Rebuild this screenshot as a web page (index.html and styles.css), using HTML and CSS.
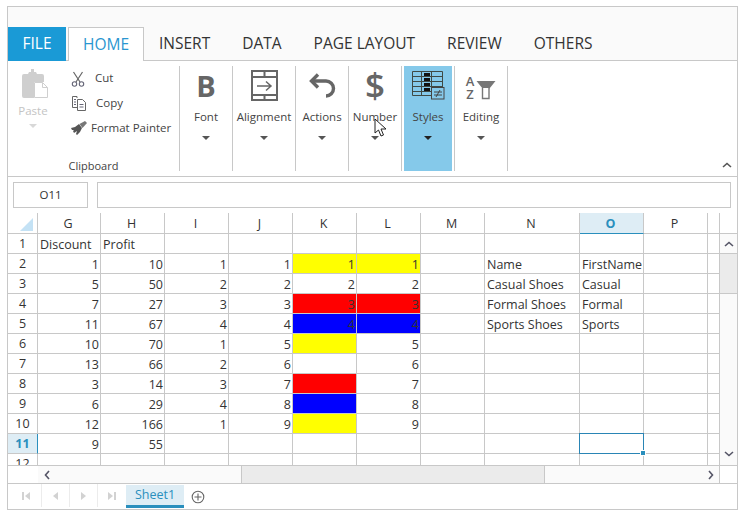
FILE: index.html
```html
<!DOCTYPE html>
<html lang="en">
<head>
    <meta charset="UTF-8">
    <meta name="viewport" content="width=device-width, initial-scale=1.0">
    <title>Spreadsheet</title>
    <link rel="stylesheet" href="styles.css">
</head>
<body>
<div class="app">
    <!-- ribbon tabs -->
    <div class="tabs">
        <div class="tab tab-file">FILE</div>
        <div class="tab tab-home">HOME</div>
        <div class="tab">INSERT</div>
        <div class="tab">DATA</div>
        <div class="tab">PAGE LAYOUT</div>
        <div class="tab">REVIEW</div>
        <div class="tab">OTHERS</div>
    </div>

    <!-- ribbon -->
    <div class="ribbon">
        <div class="group group-clipboard">
            <div class="clip-top">
                <div class="paste">
                    <svg width="28" height="31" viewBox="0 0 28 31">
                        <path d="M8 4h2V1h3v3h2l1 2h5a2 2 0 0 1 2 2v6H13v16H3a2 2 0 0 1-2-2V8a2 2 0 0 1 2-2h4z" fill="#cfcfcf"/>
                        <path d="M13.500 14.500h8l5 5v10h-13z" fill="#fff" stroke="#cfcfcf"/>
                        <path d="M21.500 14.500v5h5" fill="none" stroke="#cfcfcf"/>
                    </svg>
                    <span class="paste-label">Paste</span>
                    <span class="caret caret-off"></span>
                </div>
                <div class="clip-list">
                    <div class="clip-item clip-cut">
                        <svg width="14" height="16" viewBox="0 0 14 16">
                            <path d="M2.500 1l6.500 10M11.500 1L5 11" fill="none" stroke="#666" stroke-width="1.200"/>
                            <circle cx="3.500" cy="13" r="2.200" fill="none" stroke="#667" stroke-width="1.100"/>
                            <circle cx="10.500" cy="13" r="2.200" fill="none" stroke="#667" stroke-width="1.100"/>
                        </svg>
                        <span>Cut</span>
                    </div>
                    <div class="clip-item clip-copy">
                        <svg width="16" height="16" viewBox="0 0 16 16">
                            <path d="M6 3V1.500H1.500v11H6" fill="none" stroke="#666"/>
                            <path d="M6.500 4.500h5l3 3v8h-8z" fill="#fff" stroke="#666"/>
                            <path d="M3 4.500h2M3 7h2M3 9.500h2M8.500 9.500h4M8.500 12h4" stroke="#667" fill="none"/>
                        </svg>
                        <span>Copy</span>
                    </div>
                    <div class="clip-item clip-painter">
                        <svg width="16" height="14" viewBox="0 0 16 14">
                            <path d="M0 7l4-1 4-3 3 4-2 4-3 3-1-1 1-3-3 2-1-2 1-1-2 0z" fill="#555"/>
                            <path d="M8.500 3L14 0l2 2-4.500 5z" fill="#777"/>
                        </svg>
                        <span>Format Painter</span>
                    </div>
                </div>
            </div>
            <div class="group-name">Clipboard</div>
        </div>

        <div class="group big">
            <div class="big-icon glyph-b">B</div>
            <span class="big-label">Font</span>
            <span class="caret"></span>
        </div>
        <div class="group big group-wide">
            <div class="big-icon">
                <svg width="28" height="33" viewBox="0 0 28 33">
                    <rect x="2" y="2" width="25" height="29" fill="none" stroke="#666" stroke-width="2"/>
                    <path d="M2 8h25M2 26h25M14.500 2v6M14.500 26v5" stroke="#666" stroke-width="2" fill="none"/>
                    <path d="M7 17h14M16 12.500l5 4.500-5 4.500" stroke="#666" stroke-width="1.500" fill="none"/>
                </svg>
            </div>
            <span class="big-label">Alignment</span>
            <span class="caret"></span>
        </div>
        <div class="group big">
            <div class="big-icon">
                <svg width="27" height="25" viewBox="0 0 27 25">
                    <path d="M9 1.500L2.500 8 9 14.500" fill="none" stroke="#666" stroke-width="3.400"/>
                    <path d="M3 8h14a7.500 7.500 0 0 1 7.500 7.500v0a7.500 7.500 0 0 1-7.500 7.500" fill="none" stroke="#666" stroke-width="3.400"/>
                </svg>
            </div>
            <span class="big-label">Actions</span>
            <span class="caret"></span>
        </div>
        <div class="group big">
            <div class="big-icon glyph-dollar">$</div>
            <span class="big-label">Number</span>
            <span class="caret"></span>
        </div>
        <div class="group big group-active">
            <div class="active-fill">
                <div class="big-icon">
                    <svg width="34" height="30" viewBox="0 0 34 30">
                        <path d="M1.500 1.500h30v24h-30zM1.500 6.500h30M1.500 11.500h30M1.500 16.500h30M1.500 21.500h30M10.500 1.500v24M20.500 1.500v24" fill="none" stroke="#3f4a45"/>
                        <path d="M13 3h6v3h-6zM13 8h6v3h-6zM13 13h6v3h-6zM13 18h6v3h-6z" fill="#111"/>
                        <rect x="20.500" y="17.500" width="12.500" height="11.500" fill="#85c9ea" stroke="#444"/>
                        <path d="M23 22h8M23 25h8M29 20l-4 7" stroke="#444" fill="none"/>
                    </svg>
                </div>
                <span class="big-label">Styles</span>
                <span class="caret caret-dark"></span>
            </div>
        </div>
        <div class="group big">
            <div class="big-icon edit-icon">
                <div class="az"><span>A</span><span>Z</span></div>
                <svg width="20" height="20" viewBox="0 0 20 20">
                    <path d="M0.500 1h19l-6 7.500H6.500z" fill="#777"/>
                    <path d="M6.500 8v10.500h6.500V8" fill="#fff" stroke="#777" stroke-width="1.400"/>
                </svg>
            </div>
            <span class="big-label">Editing</span>
            <span class="caret"></span>
        </div>
        <div class="collapse">
            <svg width="10" height="6" viewBox="0 0 10 6"><path d="M1 5l4-3.500L9 5" fill="none" stroke="#555" stroke-width="1.600"/></svg>
        </div>
    </div>

    <!-- formula bar -->
    <div class="formula">
        <div class="name-box">O11</div>
        <div class="formula-input"></div>
    </div>

    <!-- grid + vertical scrollbar -->
    <div class="sheet">
        <div class="grid-wrap">
            <table class="grid">
                <colgroup>
                    <col class="c-head"><col class="c-g"><col class="c-std"><col class="c-std"><col class="c-std"><col class="c-std"><col class="c-std"><col class="c-std"><col class="c-n"><col class="c-std"><col class="c-std"><col class="c-last">
                </colgroup>
                <tr class="head-row">
                    <th class="corner"><span class="triangle"></span></th><th>G</th><th>H</th><th>I</th><th>J</th><th>K</th><th>L</th><th>M</th><th>N</th><th class="head-on">O</th><th>P</th><th class="last"></th>
                </tr>
                <tr><th>1</th><td>Discount</td><td>Profit</td><td></td><td></td><td></td><td></td><td></td><td></td><td></td><td></td><td class="last"></td></tr>
                <tr><th>2</th><td class="n">1</td><td class="n">10</td><td class="n">1</td><td class="n">1</td><td class="n yellow">1</td><td class="n yellow">1</td><td></td><td>Name</td><td>FirstName</td><td></td><td class="last"></td></tr>
                <tr><th>3</th><td class="n">5</td><td class="n">50</td><td class="n">2</td><td class="n">2</td><td class="n">2</td><td class="n">2</td><td></td><td>Casual Shoes</td><td>Casual</td><td></td><td class="last"></td></tr>
                <tr><th>4</th><td class="n">7</td><td class="n">27</td><td class="n">3</td><td class="n">3</td><td class="n red">3</td><td class="n red">3</td><td></td><td>Formal Shoes</td><td>Formal</td><td></td><td class="last"></td></tr>
                <tr><th>5</th><td class="n">11</td><td class="n">67</td><td class="n">4</td><td class="n">4</td><td class="n blue">4</td><td class="n blue">4</td><td></td><td>Sports Shoes</td><td>Sports</td><td></td><td class="last"></td></tr>
                <tr><th>6</th><td class="n">10</td><td class="n">70</td><td class="n">1</td><td class="n">5</td><td class="yellow"></td><td class="n">5</td><td></td><td></td><td></td><td></td><td class="last"></td></tr>
                <tr><th>7</th><td class="n">13</td><td class="n">66</td><td class="n">2</td><td class="n">6</td><td></td><td class="n">6</td><td></td><td></td><td></td><td></td><td class="last"></td></tr>
                <tr><th>8</th><td class="n">3</td><td class="n">14</td><td class="n">3</td><td class="n">7</td><td class="red"></td><td class="n">7</td><td></td><td></td><td></td><td></td><td class="last"></td></tr>
                <tr><th>9</th><td class="n">6</td><td class="n">29</td><td class="n">4</td><td class="n">8</td><td class="blue"></td><td class="n">8</td><td></td><td></td><td></td><td></td><td class="last"></td></tr>
                <tr><th>10</th><td class="n">12</td><td class="n">166</td><td class="n">1</td><td class="n">9</td><td class="yellow"></td><td class="n">9</td><td></td><td></td><td></td><td></td><td class="last"></td></tr>
                <tr><th class="row-on">11</th><td class="n">9</td><td class="n">55</td><td></td><td></td><td></td><td></td><td></td><td></td><td class="selected"><span class="sel-box"></span><span class="handle"></span></td><td></td><td class="last"></td></tr>
                <tr><th>12</th><td></td><td></td><td></td><td></td><td></td><td></td><td></td><td></td><td></td><td></td><td class="last"></td></tr>
            </table>
        </div>
        <div class="vscroll">
            <div class="vs-head"></div>
            <div class="vs-btn">
                <svg width="10" height="6" viewBox="0 0 10 6"><path d="M1 5l4-3.500L9 5" fill="none" stroke="#556" stroke-width="1.600"/></svg>
            </div>
            <div class="vs-thumb"></div>
            <div class="vs-track">
                <svg width="10" height="6" viewBox="0 0 10 6"><path d="M1 1l4 3.500L9 1" fill="none" stroke="#556" stroke-width="1.600"/></svg>
            </div>
        </div>
    </div>

    <!-- horizontal scrollbar -->
    <div class="hscroll">
        <div class="hs-gap"></div>
        <div class="hs-left">
            <svg width="6" height="10" viewBox="0 0 6 10"><path d="M5 1L1.500 5 5 9" fill="none" stroke="#556" stroke-width="1.600"/></svg>
        </div>
        <div class="hs-thumb"></div>
        <div class="hs-right">
            <svg width="6" height="10" viewBox="0 0 6 10"><path d="M1 1l3.500 4L1 9" fill="none" stroke="#556" stroke-width="1.600"/></svg>
        </div>
        <div class="hs-end"></div>
    </div>

    <!-- sheet tabs -->
    <div class="sheet-tabs">
        <div class="nav nav-first">
            <svg width="8" height="8" viewBox="0 0 8 8"><path d="M0 0h2v8H0zM8 0v8L3 4z" fill="#d2d2d2"/></svg>
        </div>
        <div class="nav">
            <svg width="5" height="8" viewBox="0 0 5 8"><path d="M5 0v8L0 4z" fill="#d2d2d2"/></svg>
        </div>
        <div class="nav">
            <svg width="5" height="8" viewBox="0 0 5 8"><path d="M0 0v8l5-4z" fill="#d2d2d2"/></svg>
        </div>
        <div class="nav nav-last">
            <svg width="8" height="8" viewBox="0 0 8 8"><path d="M8 0H6v8h2zM0 0v8l5-4z" fill="#d2d2d2"/></svg>
        </div>
        <div class="sheet-tab">Sheet1</div>
        <div class="add-sheet">
            <svg width="14" height="14" viewBox="0 0 14 14">
                <circle cx="7" cy="7" r="5.800" fill="none" stroke="#666" stroke-width="1.100"/>
                <path d="M3.500 7h7M7 3.500v7" stroke="#666" stroke-width="1.100"/>
            </svg>
        </div>
    </div>

    <svg class="cursor" width="15" height="20" viewBox="0 0 15 20">
        <path d="M1 1v14l3.500-3 2.500 6 2.500-1-2.500-6h5z" fill="#fff" stroke="#222"/>
    </svg>
</div>
</body>
</html>
```

FILE: styles.css
```css
* {
    box-sizing: border-box;
}
body {
    margin: 0;
    background-color: #fff;
    font-family: "Open Sans", Arial, sans-serif;
    color: #444;
}
.app {
    position: relative;
    width: 731px;
    height: 504px;
    margin: 6px 0 0 7px;
    border: 1px solid #c8c8c8;
    display: flex;
    flex-direction: column;
}

/* tabs */
.tabs {
    height: 54px;
    flex: none;
    display: flex;
    align-items: flex-end;
    background-color: #fafafa;
    border-bottom: 1px solid #c8c8c8;
}
.tab {
    height: 34px;
    margin-bottom: -1px;
    margin-right: 1px;
    padding: 0 16px 0 15px;
    font-size: 15.500px;
    line-height: 32px;
    color: #333;
}
.tab-file {
    width: 58px;
    padding: 0;
    margin-right: 2px;
    text-align: center;
    background-color: #1a9ad6;
    color: #fff;
}
.tab-home {
    width: 76px;
    padding: 0;
    margin-right: 0;
    text-align: center;
    background-color: #fff;
    color: #2a96d0;
    border: 1px solid #c8c8c8;
    border-bottom: none;
}

/* ribbon */
.ribbon {
    height: 116px;
    flex: none;
    display: flex;
    padding-top: 5px;
    padding-bottom: 5px;
    border-bottom: 1px solid #c8c8c8;
    background-color: #fff;
}
.group {
    flex: none;
    width: 53px;
    border-right: 1px solid #c8c8c8;
}
.group-clipboard {
    width: 172px;
    display: flex;
    flex-direction: column;
}
.clip-top {
    display: flex;
    flex: 1;
}
.paste {
    width: 50px;
    margin-right: 13px;
    display: flex;
    flex-direction: column;
    align-items: center;
}
.paste svg {
    margin: 2px 0 0 3px;
}
.paste-label {
    margin-top: 4px;
    font-size: 11.500px;
    line-height: 16px;
    color: #c4c4c4;
}
.clip-list {
    display: flex;
    flex-direction: column;
}
.clip-item {
    height: 25px;
    display: flex;
    align-items: center;
    font-size: 11.500px;
    color: #444;
}
.clip-cut {
    height: 22px;
    margin-bottom: 2px;
}
.clip-cut svg {
    margin-top: 4px;
}
.clip-cut span,
.clip-copy span {
    margin-left: 10px;
}
.clip-copy svg {
    margin-right: -1px;
}
.clip-painter svg {
    margin-right: 4px;
}
.group-name {
    height: 17px;
    text-align: center;
    font-size: 11px;
    line-height: 24px;
    color: #444;
}
.big {
    display: flex;
    flex-direction: column;
    align-items: center;
}
.group-wide {
    width: 63px;
}
.big-icon {
    height: 38px;
    display: flex;
    align-items: center;
    justify-content: center;
}
.big-label {
    margin-top: 5px;
    font-size: 11.500px;
    line-height: 16px;
    white-space: nowrap;
    color: #444;
}
.glyph-b {
    padding-top: 2px;
    font-size: 29px;
    font-weight: 700;
    color: #666;
    line-height: 38px;
}
.glyph-dollar {
    font-size: 35px;
    font-weight: 600;
    color: #666;
    line-height: 38px;
}
.caret {
    display: block;
    width: 0;
    height: 0;
    margin-top: 11px;
    border-left: 4px solid transparent;
    border-right: 4px solid transparent;
    border-top: 4px solid #555;
}
.caret-off {
    margin-top: 5px;
    border-top-color: #d8d8d8;
}
.caret-dark {
    border-top-color: #222;
}
.group-active {
    padding: 0 2px;
}
.active-fill {
    width: 48px;
    height: 105px;
    background-color: #85c9ea;
    display: flex;
    flex-direction: column;
    align-items: center;
}
.edit-icon {
    gap: 2px;
    align-items: flex-end;
    padding-bottom: 3px;
}
.edit-icon svg {
    margin-bottom: 1px;
}
.az {
    display: flex;
    flex-direction: column;
    align-items: center;
    font-size: 13px;
    font-weight: 600;
    line-height: 13px;
    color: #666;
}
.collapse {
    margin-left: auto;
    align-self: flex-end;
    padding: 0 5px 3px 0;
    line-height: 0;
}

/* formula bar */
.formula {
    height: 36px;
    flex: none;
    display: flex;
    padding: 5px 6px 5px 5px;
    gap: 9px;
}
.name-box {
    width: 75px;
    height: 26px;
    border: 1px solid #c8c8c8;
    text-align: center;
    font-size: 11.500px;
    line-height: 24px;
    color: #333;
}
.formula-input {
    flex: 1;
    height: 26px;
    border: 1px solid #c8c8c8;
}

/* grid */
.sheet {
    display: flex;
    height: 252px;
    flex: none;
}
.grid-wrap {
    width: 711px;
    height: 252px;
    overflow: hidden;
}
.grid {
    table-layout: fixed;
    width: 711px;
    border-collapse: separate;
    border-spacing: 0;
    font-size: 12.500px;
    color: #333;
}
.c-head { width: 30px; }
.c-g { width: 63px; }
.c-std { width: 64px; }
.c-n { width: 95px; }
.c-last { width: 11px; }
.grid td,
.grid th {
    height: 20px;
    padding: 0 2px;
    border-right: 1px solid #c8c8c8;
    border-bottom: 1px solid #c8c8c8;
    overflow: hidden;
    white-space: nowrap;
    line-height: 17px;
}
.grid td {
    padding-top: 2px;
}
.grid th {
    font-weight: 400;
    text-align: center;
}
.grid .head-row th {
    height: 21px;
    padding: 0 4px 0 2px;
}
.grid .n {
    text-align: right;
    padding-right: 1px;
}
.grid .last {
    border-right: none;
}
.yellow { background-color: #ffff00; }
.red { background-color: #ff0000; }
.blue { background-color: #0000ff; }
.grid .corner {
    position: relative;
}
.triangle {
    position: absolute;
    right: 4px;
    bottom: 2px;
    width: 0;
    height: 0;
    border-left: 13px solid transparent;
    border-bottom: 13px solid #c4e2f5;
}
.grid .head-on {
    background-color: #deedf5;
    border-bottom-color: #2a8fbd;
    color: #2a8fbd;
    font-weight: 700;
}
.grid .row-on {
    background-color: #deedf5;
    border-right-color: #2a8fbd;
    color: #2a8fbd;
    font-weight: 700;
}
.grid .selected {
    position: relative;
    overflow: visible;
}
.sel-box {
    position: absolute;
    top: -1px;
    left: -1px;
    right: -1px;
    bottom: -1px;
    border: 1px solid #2a85b5;
}
.handle {
    position: absolute;
    right: -3px;
    bottom: -3px;
    width: 6px;
    height: 6px;
    background-color: #2a8fbd;
    border: 1px solid #fff;
}

/* scrollbars */
.vscroll {
    flex: 1;
    display: flex;
    flex-direction: column;
    border-left: 1px solid #c8c8c8;
}
.vs-head {
    height: 21px;
    flex: none;
    border-bottom: 1px solid #c8c8c8;
}
.vs-btn {
    height: 19px;
    flex: none;
    display: flex;
    align-items: center;
    justify-content: center;
    background-color: #fafafa;
}
.vs-thumb {
    height: 41px;
    flex: none;
    background-color: #ebebeb;
    border-top: 1px solid #c8c8c8;
    border-bottom: 1px solid #c8c8c8;
}
.vs-track {
    flex: 1;
    display: flex;
    align-items: flex-end;
    justify-content: center;
    padding-bottom: 8px;
    background-color: #fafafa;
}
.hscroll {
    height: 19px;
    flex: none;
    display: flex;
    border-top: 1px solid #c8c8c8;
    border-bottom: 1px solid #c8c8c8;
}
.hs-gap {
    width: 30px;
}
.hs-left {
    width: 203px;
    padding-left: 6px;
    display: flex;
    align-items: center;
    background-color: #fafafa;
}
.hs-thumb {
    width: 304px;
    background-color: #ebebeb;
    border-left: 1px solid #c8c8c8;
    border-right: 1px solid #c8c8c8;
}
.hs-right {
    width: 174px;
    padding-right: 5px;
    display: flex;
    align-items: center;
    justify-content: flex-end;
    background-color: #fafafa;
}
.hs-end {
    flex: 1;
    border-left: 1px solid #c8c8c8;
}

/* sheet tabs */
.sheet-tabs {
    flex: 1;
    display: flex;
    align-items: stretch;
}
.nav {
    width: 28px;
    height: 23px;
    display: flex;
    align-items: center;
    justify-content: center;
    border-right: 1px solid #ececec;
}
.nav-first {
    width: 34px;
    padding-left: 2px;
}
.nav-last {
    border-right: none;
}
.sheet-tab {
    width: 58px;
    height: 23px;
    margin-top: 1px;
    background-color: #deedf5;
    border-bottom: 3px solid #2a8fbd;
    text-align: center;
    font-size: 12.500px;
    line-height: 19px;
    color: #2a8fbd;
}
.add-sheet {
    margin-left: 7px;
    padding-top: 6px;
    line-height: 0;
}

/* mouse pointer */
.cursor {
    position: absolute;
    left: 366px;
    top: 111px;
}
```
